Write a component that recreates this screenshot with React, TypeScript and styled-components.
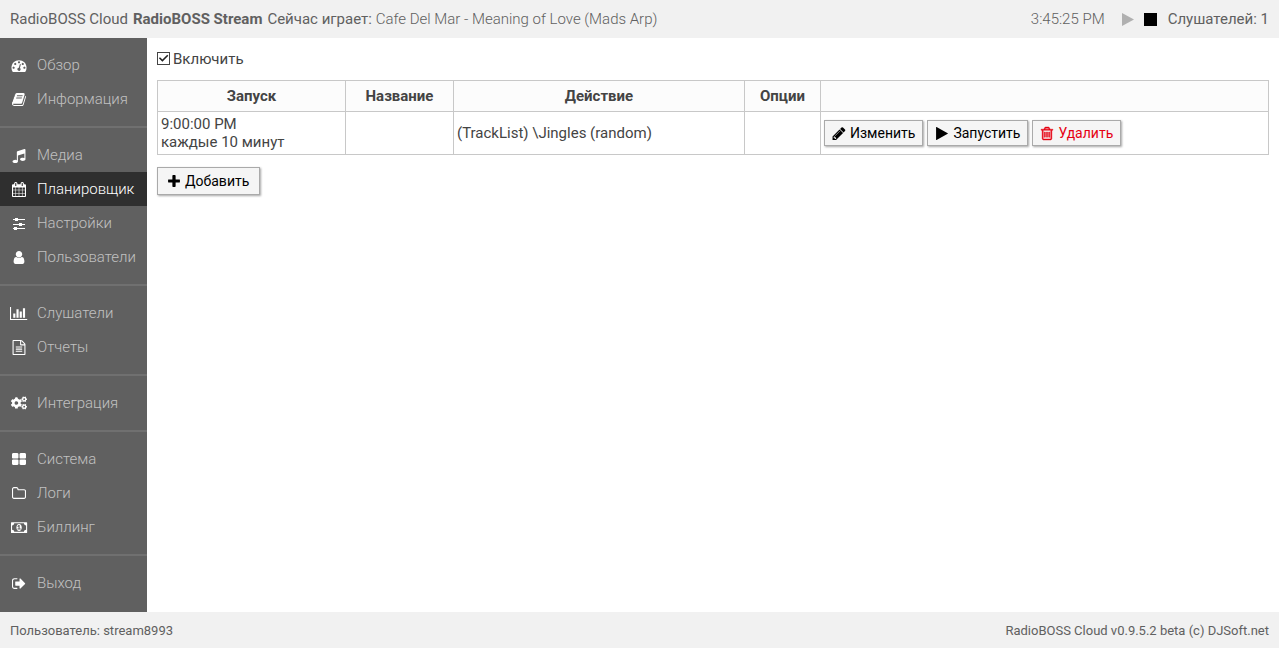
import React from 'react';
import styled, { createGlobalStyle } from 'styled-components';
import { FaCogs } from 'react-icons/fa';

const GlobalStyle = createGlobalStyle`
  *, *::before, *::after { box-sizing: border-box; }
  body {
    margin: 0;
    background: #fff;
    color: #444;
    font: 400 15px/18px Roboto, "Noto Sans", sans-serif;
  }
  button, input { font: inherit; }
`;

const glyphs = {
  dashboard:
    'M384 1152q0-53-37.5-90.5t-90.5-37.5-90.5 37.5-37.5 90.5 37.5 90.5 90.5 37.5 90.5-37.5 37.5-90.5zm192-448q0-53-37.5-90.5t-90.5-37.5-90.5 37.5-37.5 90.5 37.5 90.5 90.5 37.5 90.5-37.5 37.5-90.5zm428 481l101-382q6-26-7.5-48.5t-38.5-29.5-48 6.5-30 39.5l-101 382q-60 5-107 43.5t-63 98.5q-20 77 20 146t117 89 146-20 89-117q16-60-6-117t-72-91zm660-33q0-53-37.5-90.5t-90.5-37.5-90.5 37.5-37.5 90.5 37.5 90.5 90.5 37.5 90.5-37.5 37.5-90.5zm-640-640q0-53-37.5-90.5t-90.5-37.5-90.5 37.5-37.5 90.5 37.5 90.5 90.5 37.5 90.5-37.5 37.5-90.5zm448 192q0-53-37.5-90.5t-90.5-37.5-90.5 37.5-37.5 90.5 37.5 90.5 90.5 37.5 90.5-37.5 37.5-90.5zm320 448q0 261-141 483-19 29-54 29h-1402q-35 0-54-29-141-221-141-483 0-182 71-348t191-286 286-191 348-71 348 71 286 191 191 286 71 348z',
  book: 'M1703 478q40 57 18 129l-275 906q-19 64-76.5 107.5t-122.5 43.5h-923q-77 0-148.5-53.5t-99.5-131.5q-24-67-2-127 0-4 3-27t4-37q1-8-3-21.5t-3-19.5q2-11 8-21t16.5-23.5 16.5-23.5q23-38 45-91.5t30-91.5q3-10 .5-30t-.5-28q3-11 17-28t17-23q21-36 42-92t25-90q1-9-2.5-32t.5-28q4-13 22-30.5t22-22.5q19-26 42.5-84.5t27.5-96.5q1-8-3-25.5t-2-26.5q2-8 9-18t18-23 17-21q8-12 16.5-30.5t15-35 16-36 19.5-32 26.5-23.5 36-11.5 47.5 5.5l-1 3q38-9 51-9h761q74 0 114 56t18 130l-274 906q-36 119-71.5 153.5t-128.5 34.5h-869q-27 0-38 15-11 16-1 43 24 70 144 70h923q29 0 56-15.5t35-41.5l300-987q7-22 5-57 38 15 59 43zm-1064 2q-4 13 2 22.5t20 9.5h608q13 0 25.5-9.5t16.5-22.5l21-64q4-13-2-22.5t-20-9.5h-608q-13 0-25.5 9.5t-16.5 22.5zm-83 256q-4 13 2 22.5t20 9.5h608q13 0 25.5-9.5t16.5-22.5l21-64q4-13-2-22.5t-20-9.5h-608q-13 0-25.5 9.5t-16.5 22.5z',
  music:
    'M1664 224v1120q0 50-34 89t-86 60.5-103.5 32-96.5 10.5-96.5-10.5-103.5-32-86-60.5-34-89 34-89 86-60.5 103.5-32 96.5-10.5q105 0 192 39v-537l-768 237v709q0 50-34 89t-86 60.5-103.5 32-96.5 10.5-96.5-10.5-103.5-32-86-60.5-34-89 34-89 86-60.5 103.5-32 96.5-10.5q105 0 192 39v-967q0-31 19-56.5t49-35.5l832-256q12-4 28-4 40 0 68 28t28 68z',
  calendar:
    'M192 1664h288v-288h-288v288zm352 0h320v-288h-320v288zm-352-352h288v-320h-288v320zm352 0h320v-320h-320v320zm-352-384h288v-288h-288v288zm736 736h320v-288h-320v288zm-384-736h320v-288h-320v288zm768 736h288v-288h-288v288zm-384-352h320v-320h-320v320zm-352-864v-288q0-13-9.5-22.5t-22.5-9.5h-64q-13 0-22.5 9.5t-9.5 22.5v288q0 13 9.5 22.5t22.5 9.5h64q13 0 22.5-9.5t9.5-22.5zm736 864h288v-320h-288v320zm-384-384h320v-288h-320v288zm384 0h288v-288h-288v288zm32-480v-288q0-13-9.5-22.5t-22.5-9.5h-64q-13 0-22.5 9.5t-9.5 22.5v288q0 13 9.5 22.5t22.5 9.5h64q13 0 22.5-9.5t9.5-22.5zm384-64v1280q0 52-38 90t-90 38h-1408q-52 0-90-38t-38-90v-1280q0-52 38-90t90-38h128v-96q0-66 47-113t113-47h64q66 0 113 47t47 113v96h384v-96q0-66 47-113t113-47h64q66 0 113 47t47 113v96h128q52 0 90 38t38 90z',
  sliders:
    'M183 357h238v119h-238zM778 357h833v119h-833zM421 238h357v357h-357zM183 952h714v119h-714zM1254 952h357v119h-357zM897 833h357v357h-357zM183 1428h119v119h-119zM659 1428h952v119h-952zM302 1309h357v357h-357z',
  user: 'M1536 1399q0 109-62.5 187t-150.5 78h-854q-88 0-150.5-78t-62.5-187q0-85 8.5-160.5t31.5-152 58.5-131 94-89 134.5-34.5q131 128 313 128t313-128q76 0 134.5 34.5t94 89 58.5 131 31.5 152 8.5 160.5zm-256-887q0 159-112.5 271.5t-271.5 112.5-271.5-112.5-112.5-271.5 112.5-271.5 271.5-112.5 271.5 112.5 112.5 271.5z',
  chart:
    'M640 896v512h-256v-512h256zm384-512v1024h-256v-1024h256zm1024 1152v128h-2048v-1536h128v1408h1920zm-640-896v768h-256v-768h256zm384-384v1152h-256v-1152h256z',
  file: 'M1596 380q28 28 48 76t20 88v1152q0 40-28 68t-68 28h-1344q-40 0-68-28t-28-68v-1600q0-40 28-68t68-28h896q40 0 88 20t76 48zm-444-244v376h376q-10-29-22-41l-313-313q-12-12-41-22zm384 1528v-1024h-416q-40 0-68-28t-28-68v-416h-768v1536h1280zm-1024-864q0-14 9-23t23-9h704q14 0 23 9t9 23v64q0 14-9 23t-23 9h-704q-14 0-23-9t-9-23v-64zm736 224q14 0 23 9t9 23v64q0 14-9 23t-23 9h-704q-14 0-23-9t-9-23v-64q0-14 9-23t23-9h704zm0 256q14 0 23 9t9 23v64q0 14-9 23t-23 9h-704q-14 0-23-9t-9-23v-64q0-14 9-23t23-9h704z',
  tiles:
    'M832 1024v384q0 52-38 90t-90 38h-512q-52 0-90-38t-38-90v-384q0-52 38-90t90-38h512q52 0 90 38t38 90zm0-768v384q0 52-38 90t-90 38h-512q-52 0-90-38t-38-90v-384q0-52 38-90t90-38h512q52 0 90 38t38 90zm896 768v384q0 52-38 90t-90 38h-512q-52 0-90-38t-38-90v-384q0-52 38-90t90-38h512q52 0 90 38t38 90zm0-768v384q0 52-38 90t-90 38h-512q-52 0-90-38t-38-90v-384q0-52 38-90t90-38h512q52 0 90 38t38 90z',
  folder:
    'M1600 1312v-704q0-40-28-68t-68-28h-704q-40 0-68-28t-28-68v-64q0-40-28-68t-68-28h-320q-40 0-68 28t-28 68v960q0 40 28 68t68 28h1216q40 0 68-28t28-68zm128-704v704q0 92-66 158t-158 66h-1216q-92 0-158-66t-66-158v-960q0-92 66-158t158-66h320q92 0 158 66t66 158v32h672q92 0 158 66t66 158z',
  money:
    'M64 256h1792q64 0 64 64v1152q0 64-64 64h-1792q-64 0-64-64v-1152q0-64 64-64zM384 384q0 106-75 181t-181 75v512q106 0 181 75t75 181h1152q0-106 75-181t181-75v-512q-106 0-181-75t-75-181zM960 480q150 0 235 126t85 290-85 290-235 126-235-126-85-290 85-290 235-126zM896 608l-144 133 77 80 67-58v261h-128v96h384v-96h-128v-416z',
  exit: 'M704 1440q0 4 1 20t.5 26.5-3 23.5-10 19.5-20.5 6.5h-320q-119 0-203.5-84.5t-84.5-203.5v-704q0-119 84.5-203.5t203.5-84.5h320q13 0 22.5 9.5t9.5 22.5q0 4 1 20t.5 26.5-3 23.5-10 19.5-20.5 6.5h-320q-66 0-113 47t-47 113v704q0 66 47 113t113 47h312l11.5 1 11.5 3 8 5.5 7 9 2 13.5zm928-544q0 26-19 45l-544 544q-19 19-45 19t-45-19-19-45v-288h-448q-26 0-45-19t-19-45v-384q0-26 19-45t45-19h448v-288q0-26 19-45t45-19 45 19l544 544q19 19 19 45z',
  pencil:
    'M491 1536l91-91-235-235-91 91v107h128v128h107zm523-928q0-22-22-22-10 0-17 7l-542 542q-7 7-7 17 0 22 22 22 10 0 17-7l542-542q7-7 7-17zm-54-192l416 416-832 832h-416v-416zm683 96q0 53-37 90l-166 166-416-416 166-165q36-38 90-38 53 0 91 38l235 234q37 39 37 91z',
  play: 'M1576 927l-1328 738q-23 13-39.5 3t-16.5-36v-1472q0-26 16.5-36t39.5 3l1328 738q23 13 23 31t-23 31z',
  trash:
    'M704 736v576q0 14-9 23t-23 9h-64q-14 0-23-9t-9-23v-576q0-14 9-23t23-9h64q14 0 23 9t9 23zm256 0v576q0 14-9 23t-23 9h-64q-14 0-23-9t-9-23v-576q0-14 9-23t23-9h64q14 0 23 9t9 23zm256 0v576q0 14-9 23t-23 9h-64q-14 0-23-9t-9-23v-576q0-14 9-23t23-9h64q14 0 23 9t9 23zm128 724v-948h-896v948q0 22 7 40.5t14.5 27 10.5 8.5h832q3 0 10.5-8.5t14.5-27 7-40.5zm-672-1076h448l-48-117q-7-9-17-11h-317q-10 2-17 11zm928 32v64q0 14-9 23t-23 9h-96v948q0 83-47 143.5t-113 60.5h-832q-66 0-113-58.5t-47-141.5v-952h-96q-14 0-23-9t-9-23v-64q0-14 9-23t23-9h309l70-167q15-37 54-63t79-26h320q40 0 79 26t54 63l70 167h309q14 0 23 9t9 23z',
  plus: 'M1600 736v192q0 40-28 68t-68 28h-416v416q0 40-28 68t-68 28h-192q-40 0-68-28t-28-68v-416h-416q-40 0-68-28t-28-68v-192q0-40 28-68t68-28h416v-416q0-40 28-68t68-28h192q40 0 68 28t28 68v416h416q40 0 68 28t28 68z',
};

type GlyphName = keyof typeof glyphs;

/* Horizontal start and extent of each glyph's box, with its drawn width. */
const standardBox = { x: 64, span: 1664, width: 14 };
const wideBoxes: Partial<Record<GlyphName, typeof standardBox>> = {
  chart: { x: 0, span: 2140, width: 18 },
  money: { x: 0, span: 1902, width: 16 },
};

const Svg = styled.svg<{ $w: number; $bold: boolean }>`
  display: block;
  flex: none;
  width: ${(p) => p.$w}px;
  height: 16px;
  overflow: visible;
  fill: currentColor;
  fill-rule: evenodd;
  stroke: ${(p) => (p.$bold ? 'currentColor' : 'none')};
  stroke-width: 50;
`;

function Glyph({ name }: { name: GlyphName }) {
  const box = wideBoxes[name] ?? standardBox;
  return (
    <Svg
      $w={box.width}
      $bold={name === 'trash'}
      viewBox={`${box.x} -119 ${box.span} 1902`}
      aria-hidden="true"
    >
      <path d={glyphs[name]} />
    </Svg>
  );
}

const Page = styled.div`
  display: flex;
  flex-direction: column;
  min-height: 100vh;
`;

const TopBar = styled.header`
  display: flex;
  align-items: center;
  justify-content: space-between;
  padding: 10px;
  background: #f1f1f1;
  color: #606060;
`;

const TopGroup = styled.div<{ $gap: number }>`
  display: flex;
  align-items: center;
  gap: ${(p) => p.$gap}px;
`;

const Light = styled.span`
  font-weight: 300;
`;

const Transport = styled.div`
  display: flex;
  align-items: center;
  gap: 10px;
  margin: 0 4px 0 10px;
`;

const IconButton = styled.button`
  display: block;
  border: 0;
  padding: 0;
  background: none;
  svg { display: block; }
`;

const Body = styled.div`
  display: flex;
  flex: 1;
`;

const Sidebar = styled.nav`
  flex: none;
  width: 147px;
  padding: 10px 0 12px;
  background: #606060;
`;

const MenuGroup = styled.ul`
  list-style: none;
  margin: 0;
  padding: 0;
  & + & {
    margin-top: 10px;
    border-top: 2px solid #707070;
    padding-top: 10px;
  }
`;

const MenuLink = styled.a<{ $active?: boolean }>`
  display: flex;
  align-items: center;
  gap: 9px;
  padding: 8px 10px;
  background: ${(p) => (p.$active ? '#2f2f2f' : 'transparent')};
  color: ${(p) => (p.$active ? '#fff' : '#c0c0c0')};
  font-weight: 300;
  text-decoration: none;
`;

const MenuIcon = styled.span`
  display: flex;
  justify-content: center;
  flex: none;
  width: 18px;
  color: #fff;
`;

const Main = styled.main`
  flex: 1;
  min-width: 0;
  padding: 12px 10px;
`;

const EnableLabel = styled.label`
  display: flex;
  align-items: flex-start;
  gap: 3px;
  width: max-content;
`;

const Tick = styled.input`
  appearance: none;
  display: block;
  width: 13px;
  height: 13px;
  margin: 2px 0 0;
  border: 1px solid #444;
  background: #fff;
  &:checked::before {
    content: '';
    display: block;
    height: 100%;
    background: #222;
    clip-path: polygon(8% 48%, 18% 38%, 40% 60%, 84% 16%, 94% 26%, 40% 80%);
  }
`;

const ScheduleTable = styled.table`
  width: 100%;
  margin: 12px 0;
  border-collapse: collapse;
  table-layout: fixed;
`;

const Col = styled.col<{ $w?: number }>`
  width: ${(p) => (p.$w ? `${p.$w}px` : 'auto')};
`;

const Th = styled.th`
  border: 1px solid #c8c8c8;
  padding: 6px 3px;
  background: #fcfcfc;
  text-align: center;
  font-weight: 700;
`;

const Td = styled.td`
  border: 1px solid #c8c8c8;
  padding: 3px;
`;

const Actions = styled.div`
  display: flex;
  gap: 4px;
`;

const Button = styled.button<{ $danger?: boolean; $roomy?: boolean }>`
  display: flex;
  align-items: center;
  gap: 4px;
  padding: ${(p) => (p.$roomy ? '5px 10px 5px 9px' : '4px 7px')};
  border: 1px solid #aaa;
  background: #f5f5f5;
  box-shadow: 1px 1px 2px rgba(0, 0, 0, 0.35);
  color: ${(p) => (p.$danger ? '#e60012' : '#000')};
  font-size: 14px;
  line-height: 16px;
`;

const Footer = styled.footer`
  display: flex;
  justify-content: space-between;
  padding: 11px 10px 9px;
  background: #f1f1f1;
  color: #606060;
  font-size: 13px;
  line-height: 16px;
`;

type MenuEntry = { icon: GlyphName | 'cogs'; label: string; active?: boolean };

const menu: MenuEntry[][] = [
  [
    { icon: 'dashboard', label: 'Обзор' },
    { icon: 'book', label: 'Информация' },
  ],
  [
    { icon: 'music', label: 'Медиа' },
    { icon: 'calendar', label: 'Планировщик', active: true },
    { icon: 'sliders', label: 'Настройки' },
    { icon: 'user', label: 'Пользователи' },
  ],
  [
    { icon: 'chart', label: 'Слушатели' },
    { icon: 'file', label: 'Отчеты' },
  ],
  [{ icon: 'cogs', label: 'Интеграция' }],
  [
    { icon: 'tiles', label: 'Система' },
    { icon: 'folder', label: 'Логи' },
    { icon: 'money', label: 'Биллинг' },
  ],
  [{ icon: 'exit', label: 'Выход' }],
];

export default function App() {
  return (
    <Page>
      <GlobalStyle />
      <TopBar>
        <TopGroup $gap={5}>
          <span>RadioBOSS Cloud</span>
          <strong>RadioBOSS Stream</strong>
          <span>
            Сейчас играет: <Light>Cafe Del Mar - Meaning of Love (Mads Arp)</Light>
          </span>
        </TopGroup>
        <TopGroup $gap={7}>
          <Light>3:45:25 PM</Light>
          <Transport>
            <IconButton type="button" aria-label="Запустить эфир">
              <svg width="12" height="13" viewBox="0 0 12 13">
                <path d="M0 0L12 6.5L0 13z" fill="#b0b0b0" />
              </svg>
            </IconButton>
            <IconButton type="button" aria-label="Остановить эфир">
              <svg width="13" height="13" viewBox="0 0 13 13">
                <path d="M0 0h13v13H0z" fill="#000" />
              </svg>
            </IconButton>
          </Transport>
          <span>Слушателей: 1</span>
        </TopGroup>
      </TopBar>
      <Body>
        <Sidebar>
          {menu.map((group) => (
            <MenuGroup key={group[0].label}>
              {group.map((item) => (
                <li key={item.label}>
                  <MenuLink href="#" $active={item.active} aria-current={item.active ? 'page' : undefined}>
                    <MenuIcon>
                      {item.icon === 'cogs' ? <FaCogs size={16} aria-hidden="true" /> : <Glyph name={item.icon} />}
                    </MenuIcon>
                    {item.label}
                  </MenuLink>
                </li>
              ))}
            </MenuGroup>
          ))}
        </Sidebar>
        <Main>
          <EnableLabel>
            <Tick type="checkbox" defaultChecked />
            Включить
          </EnableLabel>
          <ScheduleTable>
            <colgroup>
              <Col $w={188} />
              <Col $w={108} />
              <Col $w={291} />
              <Col $w={76} />
              <Col />
            </colgroup>
            <thead>
              <tr>
                <Th scope="col">Запуск</Th>
                <Th scope="col">Название</Th>
                <Th scope="col">Действие</Th>
                <Th scope="col">Опции</Th>
                <Th />
              </tr>
            </thead>
            <tbody>
              <tr>
                <Td>
                  9:00:00 PM
                  <br />
                  каждые 10 минут
                </Td>
                <Td />
                <Td>(TrackList) \Jingles (random)</Td>
                <Td />
                <Td>
                  <Actions>
                    <Button type="button">
                      <Glyph name="pencil" />
                      Изменить
                    </Button>
                    <Button type="button">
                      <Glyph name="play" />
                      Запустить
                    </Button>
                    <Button type="button" $danger>
                      <Glyph name="trash" />
                      Удалить
                    </Button>
                  </Actions>
                </Td>
              </tr>
            </tbody>
          </ScheduleTable>
          <Button type="button" $roomy>
            <Glyph name="plus" />
            Добавить
          </Button>
        </Main>
      </Body>
      <Footer>
        <span>Пользователь: stream8993</span>
        <span>RadioBOSS Cloud v0.9.5.2 beta (c) DJSoft.net</span>
      </Footer>
    </Page>
  );
}
